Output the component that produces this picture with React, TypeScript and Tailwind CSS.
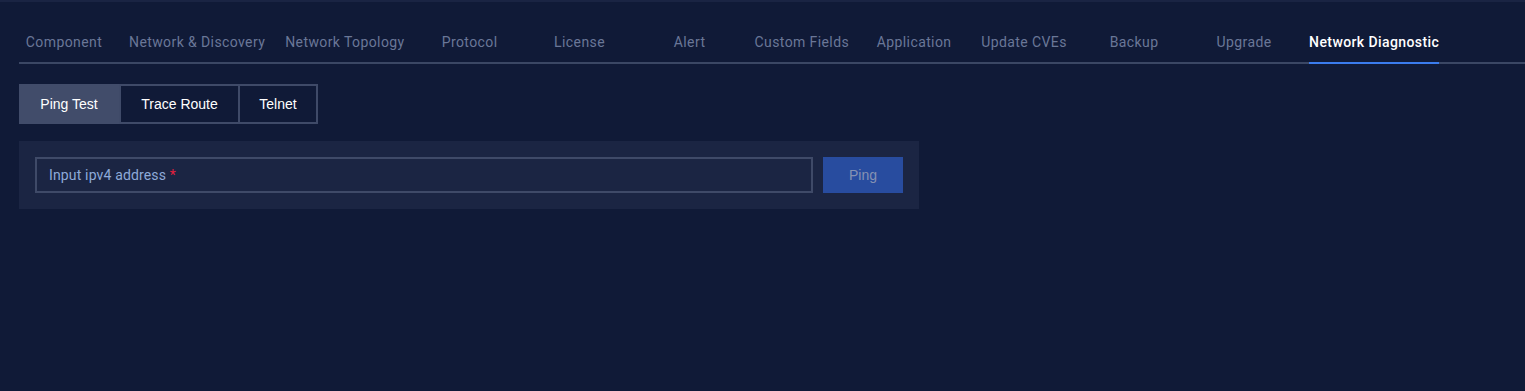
import { useState } from "react";

const tabs = [
  "Component",
  "Network & Discovery",
  "Network Topology",
  "Protocol",
  "License",
  "Alert",
  "Custom Fields",
  "Application",
  "Update CVEs",
  "Backup",
  "Upgrade",
  "Network Diagnostic",
];

const modes = [
  { key: "ping", label: "Ping Test", w: "w-[100px]" },
  { key: "trace", label: "Trace Route", w: "w-[121px]" },
  { key: "telnet", label: "Telnet", w: "w-[80px] -ml-[2px]" },
];

export default function App() {
  const [active, setActive] = useState("Network Diagnostic");
  const [mode, setMode] = useState("ping");
  const [ip, setIp] = useState("");

  return (
    <div className="min-h-[391px] bg-[#101a37] font-['Roboto',sans-serif] text-sm">
      <div className="h-[2px] bg-[#1a2443]" />
      <div className="pl-[19px] pt-[30px]">
        <div className="flex gap-5 border-b-2 border-[#3b4764] tracking-[0.4px]">
          {tabs.map((t) => (
            <button
              key={t}
              onClick={() => setActive(t)}
              className={
                "-mb-[2px] min-w-[90px] border-b-2 pb-[10px] text-center leading-5 whitespace-nowrap " +
                (t === active
                  ? "border-[#3b7ced] font-medium text-white"
                  : "border-transparent text-[#6a7797]")
              }
            >
              {t}
            </button>
          ))}
        </div>

        <div className="mt-5 flex font-['Liberation_Sans',Arial,sans-serif]">
          {modes.map((m) => (
            <button
              key={m.key}
              onClick={() => setMode(m.key)}
              className={
                "h-10 border-2 text-white " +
                m.w +
                (mode === m.key
                  ? " border-[#414c6a] bg-[#414c6a]"
                  : " border-[#3f4a68] bg-[#101a37]")
              }
            >
              {m.label}
            </button>
          ))}
        </div>

        <div className="mt-[17px] flex w-[900px] gap-[10px] bg-[#1b2543] p-4">
          <div className="relative flex h-9 flex-1 items-center border-2 border-[#3f4a68]">
            {ip === "" && (
              <span className="pointer-events-none absolute left-3 tracking-[0.15px] text-[#8eaad9]">
                Input ipv4 address <span className="text-[#e3203d]">*</span>
              </span>
            )}
            <input
              value={ip}
              onChange={(e) => setIp(e.target.value)}
              className="h-full w-full bg-transparent px-3 text-[#d5def0] outline-none"
            />
          </div>
          <button className="h-9 w-20 bg-[#284c9f] font-['Liberation_Sans',Arial,sans-serif] text-[#8592b3]">
            Ping
          </button>
        </div>
      </div>
    </div>
  );
}
